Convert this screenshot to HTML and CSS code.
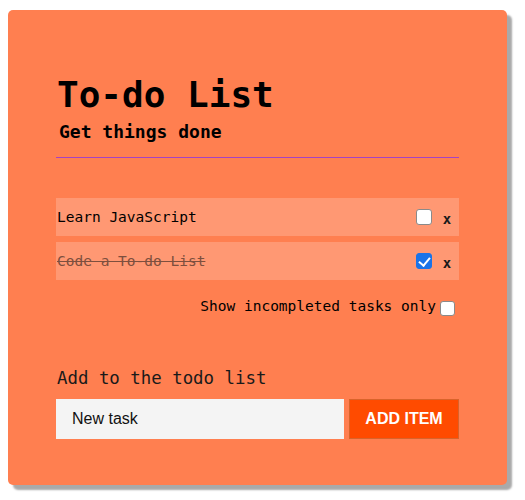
FILE: index.html
```html
<!DOCTYPE html>
<html lang="en">
<head>
<meta charset="utf-8">
<title>To-do List</title>
<link rel="stylesheet" href="styles.css">
</head>
<body>
<main class="card">
  <header class="header">
    <h1 class="title">To-do List</h1>
    <h2 class="subtitle">Get things done</h2>
  </header>
  <ul class="list">
    <li class="item">
      <span class="item-text">Learn JavaScript</span>
      <input class="check" type="checkbox">
      <button class="del" type="button">x</button>
    </li>
    <li class="item">
      <span class="item-text done">Code a To-do List</span>
      <input class="check" type="checkbox" checked>
      <button class="del" type="button">x</button>
    </li>
  </ul>
  <label class="filter">
    <span class="filter-text">Show incompleted tasks only</span>
    <input class="check filter-check" type="checkbox">
  </label>
  <section class="add">
    <div class="add-label">Add to the todo list</div>
    <form class="add-form">
      <input class="add-input" type="text" value="New task">
      <button class="add-btn" type="button">ADD ITEM</button>
    </form>
  </section>
</main>
</body>
</html>
```
FILE: styles.css
```css
* { box-sizing: border-box; }
body {
  margin: 0;
  padding: 10px 8px;
  background: #fff;
  font-family: "DejaVu Sans Mono", "Liberation Mono", monospace;
  color: #000;
}
.card {
  width: 499px;
  padding: 48px 48px 46px 48px;
  background: #ff7f50;
  border-radius: 5px;
  box-shadow: 5px 5px 2px #a9a9a9;
}
.header {
  margin-top: 15px;
  padding-bottom: 14px;
  border-bottom: 1px solid #a542c4;
}
.title {
  margin: 0;
  font-size: 36px;
  line-height: 44px;
  font-weight: bold;
  padding-left: 1px;
}
.subtitle {
  margin: 4px 0 0 0;
  font-size: 18px;
  line-height: 22px;
  font-weight: bold;
  padding-left: 3px;
}
.list {
  list-style: none;
  margin: 40px 0 0 0;
  padding: 0;
  display: flex;
  flex-direction: column;
  gap: 6px;
}
.item {
  display: flex;
  align-items: flex-start;
  height: 38px;
  background: rgba(255, 255, 255, 0.2);
  padding-right: 7px;
}
.item-text {
  flex: 1;
  font-size: 14.5px;
  line-height: 18px;
  padding-top: 10px;
  padding-left: 1px;
}
.item-text.done {
  text-decoration: line-through;
  color: #7d4f3e;
}
.check {
  appearance: none;
  -webkit-appearance: none;
  position: relative;
  width: 16px;
  height: 16px;
  margin: 11px 0 0 0;
  background: #fff;
  border: 1px solid #8a8a8a;
  border-radius: 3px;
}
.check:checked {
  background: #1a73e8;
  border-color: #1a73e8;
}
.check:checked::after {
  content: "";
  position: absolute;
  left: 4px;
  top: 1px;
  width: 5px;
  height: 9px;
  border-right: 2px solid #fff;
  border-bottom: 2px solid #fff;
  transform: rotate(40deg);
}
.del {
  margin: 13px 0 0 10px;
  padding: 0;
  border: none;
  background: none;
  font-family: "DejaVu Sans Mono", monospace;
  font-weight: bold;
  font-size: 14px;
  line-height: 16px;
  color: #1a1a1a;
  width: 10px;
}
.filter {
  display: flex;
  justify-content: flex-end;
  align-items: flex-start;
  margin-top: 18px;
}
.filter-text {
  font-size: 14.5px;
  line-height: 17px;
}
.check.filter-check {
  width: 15px;
  height: 15px;
  margin: 3px 4px 0 4px;
}
.add {
  margin-top: 52px;
}
.add-label {
  font-size: 17.4px;
  line-height: 21px;
  color: #1a1a1a;
  padding-left: 1px;
}
.add-form {
  display: flex;
  gap: 5px;
  margin: 10px 0 0 0;
}
.add-input {
  width: 288px;
  height: 40px;
  border: none;
  background: #f4f4f4;
  padding: 0 16px;
  font-family: "Liberation Sans", Arial, sans-serif;
  font-size: 16px;
  color: #111;
  outline: none;
}
.add-btn {
  flex: 1;
  height: 40px;
  background: #ff4b00;
  border: 1px solid #d9632a;
  color: #fff;
  font-family: "Liberation Sans", Arial, sans-serif;
  font-weight: bold;
  font-size: 16px;
  padding: 0;
}
```
